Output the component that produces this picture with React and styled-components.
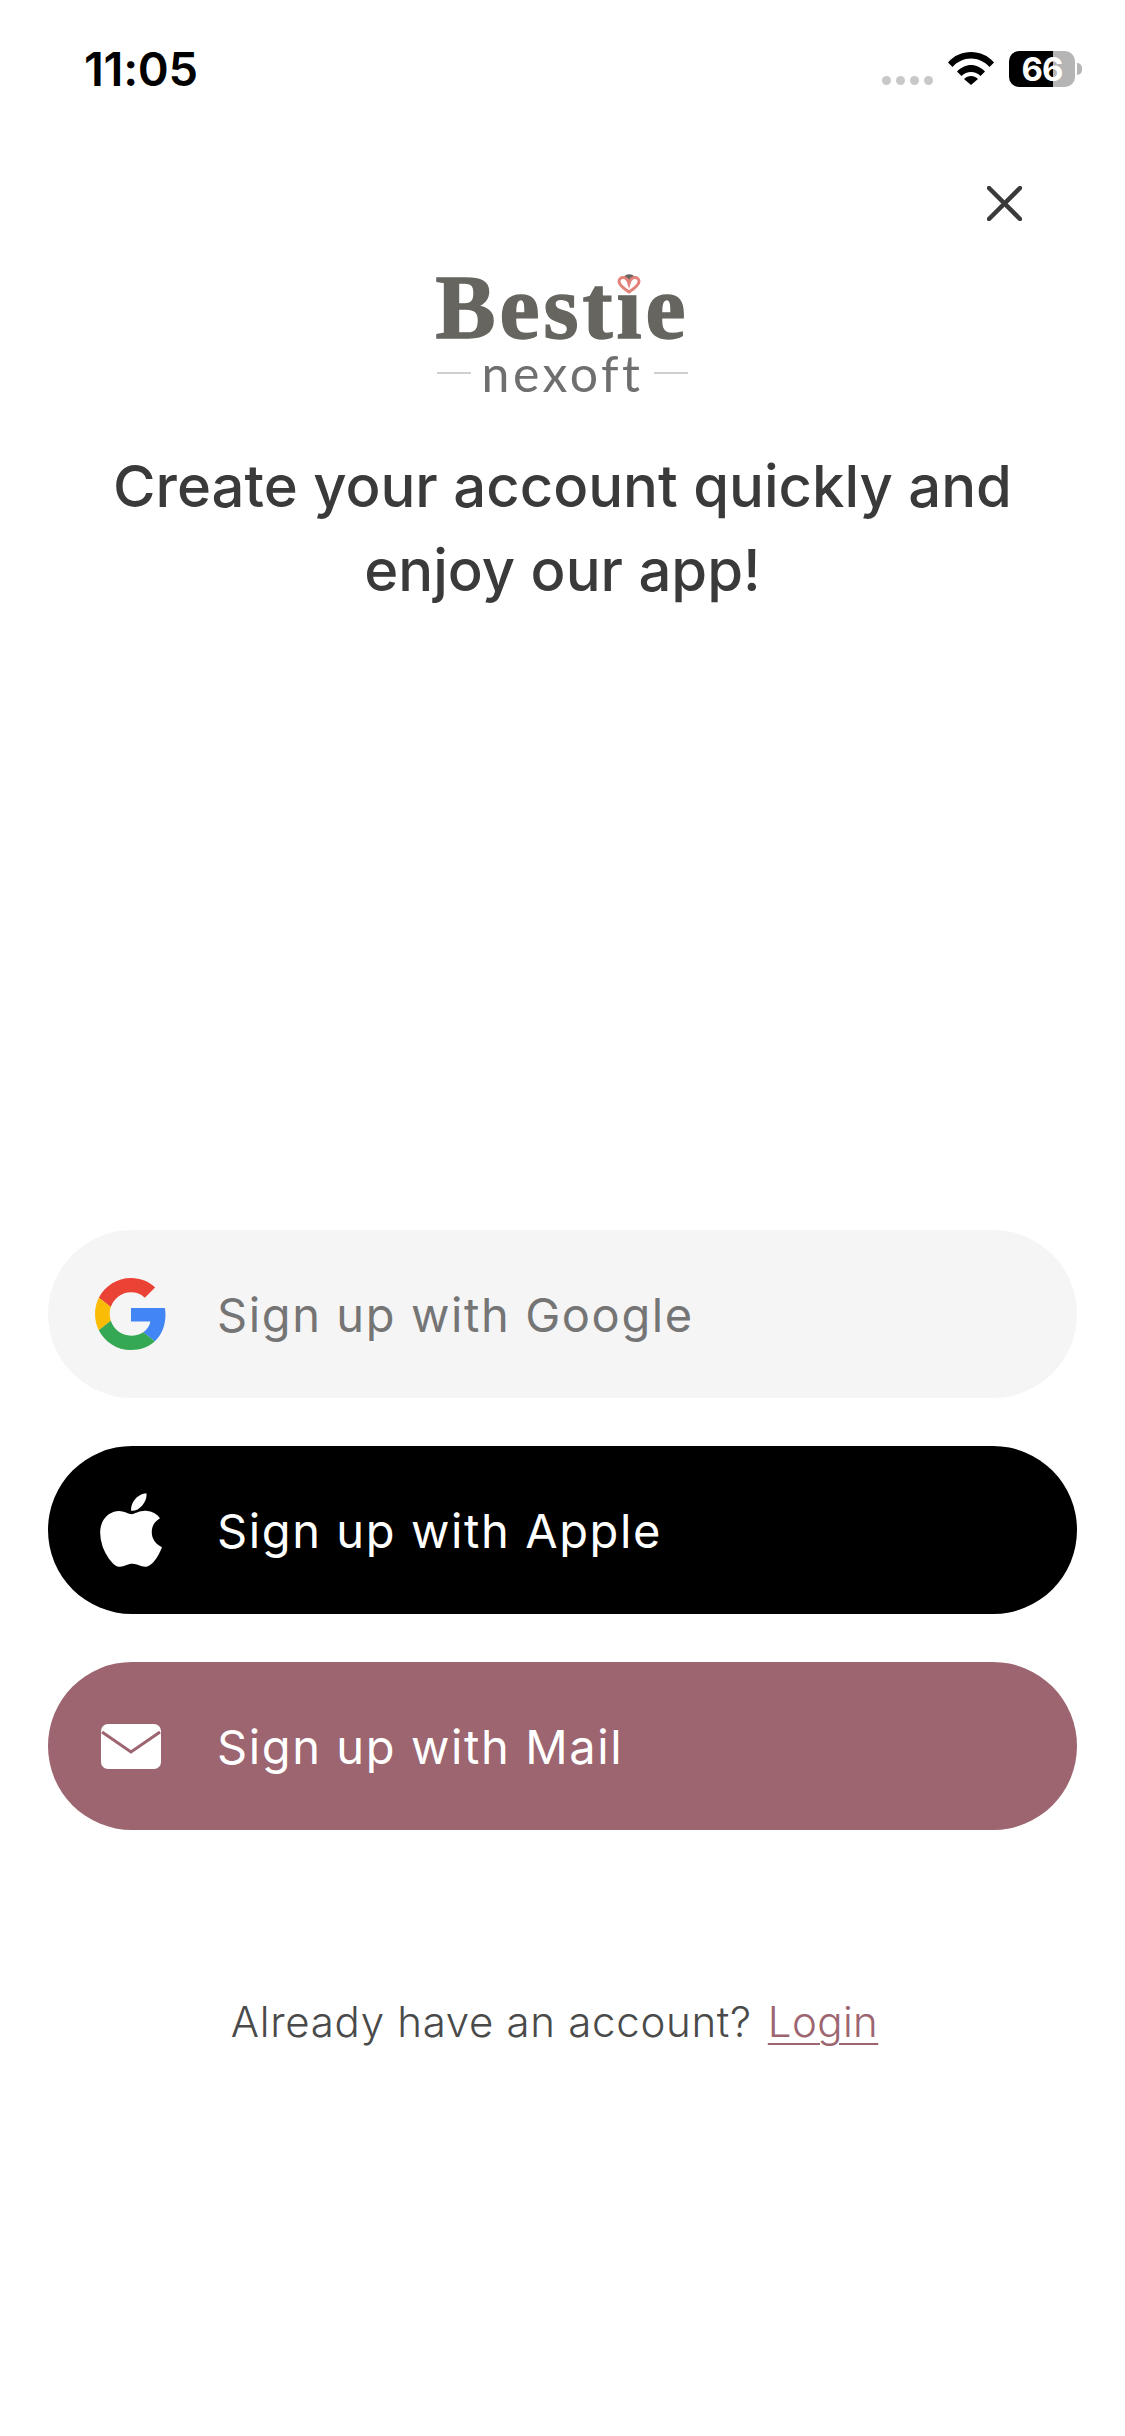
import React from "react";
import styled, { createGlobalStyle } from "styled-components";
import { FaApple } from "react-icons/fa";

const Global = createGlobalStyle`
  html, body { margin: 0; padding: 0; background: #fff; }
  * { box-sizing: border-box; }
`;

const Page = styled.div`
  width: 1125px;
  height: 2436px;
  background: #fff;
  display: flex;
  flex-direction: column;
  font-family: Inter, "Noto Sans", sans-serif;
  overflow: hidden;
`;

// ===== Status bar =====
const StatusBar = styled.div`
  height: 100px;
  padding: 41px 43px 0 84px;
  display: flex;
  justify-content: space-between;
  align-items: flex-start;
`;

const Clock = styled.div`
  font-size: 47px;
  font-weight: 600;
  line-height: 56px;
  letter-spacing: -0.3px;
  color: #000;
`;

const StatusIcons = styled.div`
  display: flex;
  align-items: flex-start;
  padding-top: 10px;
`;

const Dots = styled.div`
  display: flex;
  gap: 5px;
  margin: 25px 15px 0 0;
`;

const Dot = styled.span`
  width: 9px;
  height: 9px;
  border-radius: 50%;
  background: #c8c8c8;
`;

const Battery = styled.div`
  width: 66px;
  height: 36px;
  margin-left: 15px;
  border-radius: 10px;
  background: linear-gradient(90deg, #000 0 44px, #b5b5b5 44px);
  color: #fff;
  font-size: 33px;
  font-weight: 700;
  line-height: 36px;
  letter-spacing: -1px;
  text-align: center;
`;

const BatteryNub = styled.span`
  width: 5px;
  height: 12px;
  margin: 12px 0 0 2px;
  border-radius: 0 6px 6px 0;
  background: #b5b5b5;
`;

// ===== Header =====
const CloseRow = styled.div`
  display: flex;
  justify-content: flex-end;
  padding: 86px 103px 0 0;
`;

const Logo = styled.div`
  position: relative;
  width: 252px;
  margin: 48px auto 0;
  display: flex;
  flex-direction: column;
  align-items: center;
`;

const LogoName = styled.div`
  font-family: "Liberation Serif", serif;
  font-weight: 700;
  font-size: 90px;
  line-height: 78px;
  letter-spacing: 4px;
  color: #66655f;
  -webkit-text-stroke: 1.5px #66655f;
`;

const Heart = styled.svg`
  position: absolute;
  left: 180px;
  top: 7px;
`;

const LogoSub = styled.div`
  width: 100%;
  margin-top: 1px;
  display: flex;
  align-items: center;
  justify-content: space-between;
  font-family: Lato, sans-serif;
  font-size: 50px;
  line-height: 50px;
  letter-spacing: 3.5px;
  color: #6f6f6f;
`;

const LogoRule = styled.span`
  width: 34px;
  height: 2px;
  background: #cfcfcf;
`;

const Title = styled.h1`
  margin: 46px 0 0;
  font-size: 58px;
  font-weight: 500;
  line-height: 84px;
  text-align: center;
  color: #3a3a3a;
`;

// ===== Buttons =====
const Buttons = styled.div`
  margin-top: 618px;
  padding: 0 48px;
  display: flex;
  flex-direction: column;
  gap: 48px;
`;

const SignupButton = styled.button`
  height: 168px;
  border: none;
  border-radius: 84px;
  padding: 0;
  display: flex;
  align-items: center;
  background: ${(props) => props.bg};
  color: ${(props) => props.fg};
  font-family: inherit;
  font-size: 47px;
  font-weight: 400;
  letter-spacing: 1.6px;
`;

const IconSlot = styled.span`
  width: 169px;
  padding-right: 3px;
  display: flex;
  justify-content: center;
  color: #fff;
  flex: none;
`;

// ===== Footer =====
const Footer = styled.div`
  margin-top: 166px;
  padding-right: 16px;
  display: flex;
  justify-content: center;
  gap: 16px;
  font-size: 42px;
  font-weight: 300;
  line-height: 52px;
  letter-spacing: 0.7px;
  color: #4a4a4a;
`;

const LoginLink = styled.a`
  color: #9c6570;
  text-decoration: underline;
  text-underline-offset: 6px;
  text-decoration-thickness: 2px;
  letter-spacing: 0.4px;
`;

const GoogleIcon = () => (
  <svg width="72" height="72" viewBox="0 0 48 48">
    <path fill="#EA4335" d="M24 9.5c3.54 0 6.71 1.22 9.21 3.6l6.85-6.85C35.9 2.38 30.47 0 24 0 14.62 0 6.51 5.38 2.56 13.22l7.98 6.19C12.43 13.72 17.74 9.5 24 9.5z" />
    <path fill="#4285F4" d="M46.98 24.55c0-1.57-.15-3.09-.38-4.55H24v9.02h12.94c-.58 2.96-2.26 5.48-4.78 7.18l7.73 6c4.51-4.18 7.09-10.36 7.09-17.65z" />
    <path fill="#FBBC05" d="M10.53 28.59c-.48-1.45-.76-2.99-.76-4.59s.27-3.14.76-4.59l-7.98-6.19C.92 16.46 0 20.12 0 24c0 3.88.92 7.54 2.56 10.78l7.97-6.19z" />
    <path fill="#34A853" d="M24 48c6.48 0 11.93-2.13 15.89-5.81l-7.73-6c-2.15 1.45-4.92 2.3-8.16 2.3-6.26 0-11.57-4.22-13.47-9.91l-7.98 6.19C6.51 42.62 14.62 48 24 48z" />
  </svg>
);

const MailIcon = () => (
  <svg width="60" height="45" viewBox="0 0 60 45">
    <rect width="60" height="45" rx="7" fill="#fff" />
    <path d="M1 8 L30 28 L59 8" fill="none" stroke="#9c6570" strokeWidth="3" />
  </svg>
);

const WifiIcon = () => (
  <svg width="46" height="34" viewBox="0 0 46 34">
    <path d="M0 11.5C6 4.5 14 1 23 1s17 3.5 23 10.500l-4.500 4.500C36.500 10.500 30 7.500 23 7.500S9.500 10.500 4.500 16z" />
    <path d="M9 20.500C13 16.500 18 14 23 14s10 2.500 14 6.500l-4.500 4.500C30 22.500 26.500 21 23 21s-7 1.500-9.500 4z" />
    <path d="M16 28c2-2 4.500-3 7-3s5 1 7 3l-7 6z" />
  </svg>
);

const App = () => {
  const buttons = [
    { label: "Sign up with Google", bg: "#f5f5f5", fg: "#757575", icon: <GoogleIcon /> },
    { label: "Sign up with Apple", bg: "#000", fg: "#fff", icon: <FaApple size={84} /> },
    { label: "Sign up with Mail", bg: "#9c6570", fg: "#fff", icon: <MailIcon /> },
  ];

  return (
    <Page>
      <Global />
      <StatusBar>
        <Clock>11:05</Clock>
        <StatusIcons>
          <Dots>
            {[0, 1, 2, 3].map((i) => (
              <Dot key={i} />
            ))}
          </Dots>
          <WifiIcon />
          <Battery>66</Battery>
          <BatteryNub />
        </StatusIcons>
      </StatusBar>

      <CloseRow>
        <svg width="35" height="35" viewBox="0 0 35 35">
          <path d="M2 2 L33 33 M33 2 L2 33" stroke="#3a3a3a" strokeWidth="4.500" strokeLinecap="round" />
        </svg>
      </CloseRow>

      <Logo>
        <LogoName>Bestie</LogoName>
        <Heart width="24" height="18" viewBox="0 0 24 18">
          <path d="M12 16C6 12 2 9 2 5.500 2 3 4 1.500 6 1.500c3 0 5 2.500 6 6 1-3.500 3-6 6-6 2 0 4 1.500 4 4 0 3.500-4 6.500-10 10.500z" fill="#fff" stroke="#e2827a" strokeWidth="3" />
        </Heart>
        <LogoSub>
          <LogoRule />
          nexoft
          <LogoRule />
        </LogoSub>
      </Logo>

      <Title>
        Create your account quickly and
        <br />
        enjoy our app!
      </Title>

      <Buttons>
        {buttons.map((b) => (
          <SignupButton key={b.label} bg={b.bg} fg={b.fg}>
            <IconSlot>{b.icon}</IconSlot>
            {b.label}
          </SignupButton>
        ))}
      </Buttons>

      <Footer>
        <span>Already have an account?</span>
        <LoginLink>Login</LoginLink>
      </Footer>
    </Page>
  );
};

export default App;
